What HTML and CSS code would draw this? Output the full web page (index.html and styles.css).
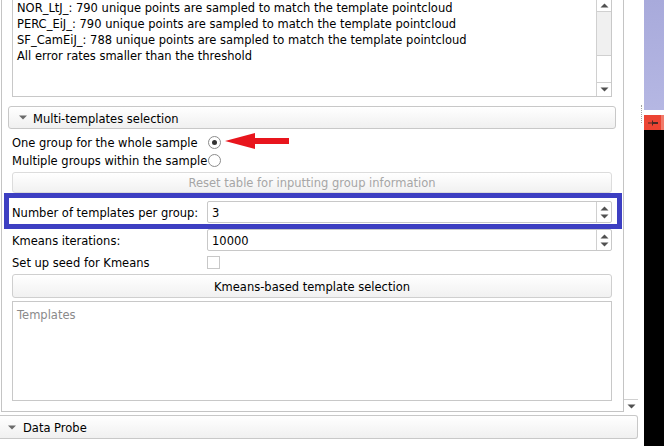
FILE: index.html
```html
<!DOCTYPE html>
<html>
<head>
<meta charset="utf-8">
<link rel="stylesheet" href="styles.css">
</head>
<body>
<div class="app">
  <div class="main">
    <div class="scroll">
      <div class="panel">
        <div class="log">
          <div class="log-text">
            <div>NOR_LtJ_: 790 unique points are sampled to match the template pointcloud</div>
            <div>PERC_EiJ_: 790 unique points are sampled to match the template pointcloud</div>
            <div>SF_CamEiJ_: 788 unique points are sampled to match the template pointcloud</div>
            <div>All error rates smaller than the threshold</div>
          </div>
          <div class="vbar">
            <div class="vbar-btn up"><svg width="9" height="5" viewBox="0 0 9 5"><path d="M0.5 4.5 L4.5 0.5 L8.5 4.5Z" fill="#505050"/></svg></div>
            <div class="vbar-thumb"></div>
            <div class="vbar-track"></div>
            <div class="vbar-btn down"><svg width="9" height="5" viewBox="0 0 9 5"><path d="M0.5 0.5 L4.5 4.5 L8.5 0.5Z" fill="#505050"/></svg></div>
          </div>
        </div>

        <div class="section-head multi">
          <svg class="tri" width="8" height="5" viewBox="0 0 8 5"><path d="M0 0.5 L8 0.5 L4 4.5Z" fill="#6a6a6a"/></svg>
          <span>Multi-templates selection</span>
        </div>

        <div class="form">
          <div class="row radio-row">
            <span class="label">One group for the whole sample</span>
            <span class="radio checked"><span class="dot"></span></span>
          </div>
          <div class="row radio-row">
            <span class="label">Multiple groups within the sample</span>
            <span class="radio"></span>
          </div>
          <div class="btn disabled reset">Reset table for inputting group information</div>
          <div class="row spin-row first-spin">
            <span class="label">Number of templates per group:</span>
            <div class="spin">
              <span class="spin-val">3</span>
              <span class="spin-arrows">
                <svg width="9" height="5" viewBox="0 0 9 5"><path d="M0.5 4.5 L4.5 0.5 L8.5 4.5Z" fill="#505050"/></svg>
                <svg width="9" height="5" viewBox="0 0 9 5"><path d="M0.5 0.5 L4.5 4.5 L8.5 0.5Z" fill="#505050"/></svg>
              </span>
            </div>
          </div>
          <div class="row spin-row second-spin">
            <span class="label">Kmeans iterations:</span>
            <div class="spin">
              <span class="spin-val">10000</span>
              <span class="spin-arrows">
                <svg width="9" height="5" viewBox="0 0 9 5"><path d="M0.5 4.5 L4.5 0.5 L8.5 4.5Z" fill="#505050"/></svg>
                <svg width="9" height="5" viewBox="0 0 9 5"><path d="M0.5 0.5 L4.5 4.5 L8.5 0.5Z" fill="#505050"/></svg>
              </span>
            </div>
          </div>
          <div class="row check-row">
            <span class="label">Set up seed for Kmeans</span>
            <span class="check"></span>
          </div>
          <div class="btn kmeans">Kmeans-based template selection</div>
          <div class="list"><span class="placeholder">Templates</span></div>
        </div>

        <div class="highlight"></div>
        <svg class="arrow" width="66" height="18" viewBox="0 0 66 18"><path d="M0 9 L30 1 L30 6 L64 6 L64 12 L30 12 L30 17 Z" fill="#e8151d"/></svg>
      </div>
      <div class="outer-bar">
        <div class="outer-track"></div>
        <div class="outer-btn"><svg width="9" height="5" viewBox="0 0 9 5"><path d="M0.5 0.5 L4.5 4.5 L8.5 0.5Z" fill="#505050"/></svg></div>
      </div>
    </div>
    <div class="section-head probe">
      <svg class="tri" width="8" height="5" viewBox="0 0 8 5"><path d="M0 0.5 L8 0.5 L4 4.5Z" fill="#6a6a6a"/></svg>
      <span>Data Probe</span>
    </div>
  </div>
  <div class="side">
    <div class="gutter"><div class="dots"></div></div>
    <div class="strip">
      <div class="lav"></div>
      <div class="gapw"></div>
      <div class="redblk">
        <svg width="10" height="6" viewBox="0 0 10 6"><path d="M0 2.5 H4 V0.5 H5 V2 H10 V4 H5 V5.5 H4 V3.5 H0Z" fill="#4a2a26"/></svg>
      </div>
      <div class="black"></div>
    </div>
  </div>
</div>
</body>
</html>
```

FILE: styles.css
```css
* { box-sizing: border-box; }
html, body {
  margin: 0;
  padding: 0;
  background: #ffffff;
}
body {
  font-family: "DejaVu Sans", "Liberation Sans", sans-serif;
  font-size: 11.5px;
  color: #000;
  width: 664px;
  height: 446px;
  overflow: hidden;
}
.app {
  display: flex;
  width: 664px;
  height: 446px;
}
.main {
  width: 638px;
  display: flex;
  flex-direction: column;
}
.scroll {
  display: flex;
  height: 412px;
}
.panel {
  position: relative;
  width: 623px;
  margin-left: 1px;
  height: 412px;
  border-left: 1px solid #c4c4c4;
  border-right: 1px solid #c4c4c4;
  border-bottom: 1px solid #c4c4c4;
  padding: 0 11px 0 10px;
  overflow: hidden;
}
.log {
  display: flex;
  height: 97px;
  border: 1px solid #c8c8c8;
  border-top: none;
  background: #fff;
}
.log-text {
  flex: 1;
  padding-left: 4px;
  margin-top: 0;
  line-height: 16px;
  white-space: nowrap;
  overflow: hidden;
}
.vbar {
  width: 15px;
  border-left: 1px solid #d0d0d0;
  display: flex;
  flex-direction: column;
}
.vbar-btn {
  height: 12px;
  display: flex;
  align-items: center;
  justify-content: center;
}
.vbar-btn.up { border-bottom: 1px solid #d0d0d0; height: 12px; }
.vbar-btn.down { border-top: 1px solid #d0d0d0; height: 14px; }
.vbar-thumb {
  height: 44px;
  background: #f0f0f0;
  border-bottom: 1px solid #d0d0d0;
}
.vbar-track { flex: 1; }

.section-head {
  display: flex;
  align-items: center;
  border: 1px solid #c8c8c8;
  border-radius: 3px;
  background: linear-gradient(#ffffff, #f0f0f0);
  padding-top: 2px;
}
.section-head .tri { margin-bottom: 2px; }
.section-head.multi {
  margin: 9px -4px 0 -4px;
  height: 23px;
  padding-left: 10px;
}
.section-head.multi .tri { margin-right: 6px; }
.section-head.probe {
  margin-top: 3px;
  height: 24px;
  width: 638px;
  padding-left: 8px;
  border-left: none;
  border-radius: 0 3px 3px 0;
}
.section-head.probe .tri { margin-right: 7px; }

.form {
  display: flex;
  flex-direction: column;
  margin-top: 4px;
}
.row {
  display: grid;
  grid-template-columns: 195px 1fr;
  align-items: center;
}
.label { white-space: nowrap; padding-top: 2px; }
.radio-row { height: 18px; }
.radio {
  width: 13px;
  height: 13px;
  border: 1px solid #8c8c8c;
  border-radius: 50%;
  background: #fff;
  margin-left: 1px;
  display: flex;
  align-items: center;
  justify-content: center;
}
.radio .dot {
  width: 5px;
  height: 5px;
  border-radius: 50%;
  background: #333;
}
.btn {
  display: flex;
  align-items: center;
  justify-content: center;
  border: 1px solid #cfcfcf;
  border-radius: 3px;
  background: linear-gradient(#ffffff, #f1f1f1);
  padding-top: 1px;
}
.btn.reset {
  margin-top: 3px;
  height: 21px;
  color: #a6a6a6;
  border-color: #dcdcdc;
}
.spin-row { height: 22px; }
.first-spin { margin-top: 8px; }
.second-spin { margin-top: 6px; }
.spin {
  height: 22px;
  display: flex;
  border: 1px solid #c8c8c8;
  border-radius: 2px;
  background: #fff;
}
.spin-val {
  flex: 1;
  padding-left: 4px;
  padding-top: 2px;
  display: flex;
  align-items: center;
}
.spin-arrows {
  width: 15px;
  border-left: 1px solid #d0d0d0;
  display: flex;
  flex-direction: column;
  align-items: center;
  justify-content: center;
  gap: 3px;
}
.check-row { height: 18px; margin-top: 2px; }
.check {
  width: 13px;
  height: 13px;
  border: 1px solid #c8c8c8;
  background: #fff;
}
.btn.kmeans {
  margin-top: 3px;
  height: 24px;
}
.list {
  margin-top: 3px;
  height: 100px;
  border: 1px solid #c8c8c8;
  padding: 6px 4px;
}
.placeholder { color: #8a8a8a; }

.highlight {
  position: absolute;
  left: 2px;
  top: 193px;
  width: 618px;
  height: 36px;
  border: 5px solid #3d3fc2;
}
.arrow {
  position: absolute;
  left: 223px;
  top: 132px;
}

.outer-bar {
  width: 14px;
  height: 412px;
  display: flex;
  flex-direction: column;
}
.outer-track { flex: 1; }
.outer-btn {
  height: 13px;
  border-top: 1px solid #d0d0d0;
  display: flex;
  align-items: center;
  justify-content: center;
}

.side {
  width: 26px;
  display: flex;
}
.gutter {
  width: 6px;
  position: relative;
}
.dots {
  margin: 105px 0 0 3px;
  width: 1px;
  height: 18px;
  border-left: 1px dotted #a0a0a0;
}
.strip {
  width: 20px;
  display: flex;
  flex-direction: column;
}
.lav {
  height: 110px;
  background: linear-gradient(#a8aadb, #b5b7e3);
}
.gapw { height: 5px; background: #fff; }
.redblk {
  height: 15px;
  background: linear-gradient(90deg, #ec4433 85%, #f07a6a 85%);
  display: flex;
  align-items: center;
  padding-left: 4px;
}
.black { flex: 1; background: #000; }
```
